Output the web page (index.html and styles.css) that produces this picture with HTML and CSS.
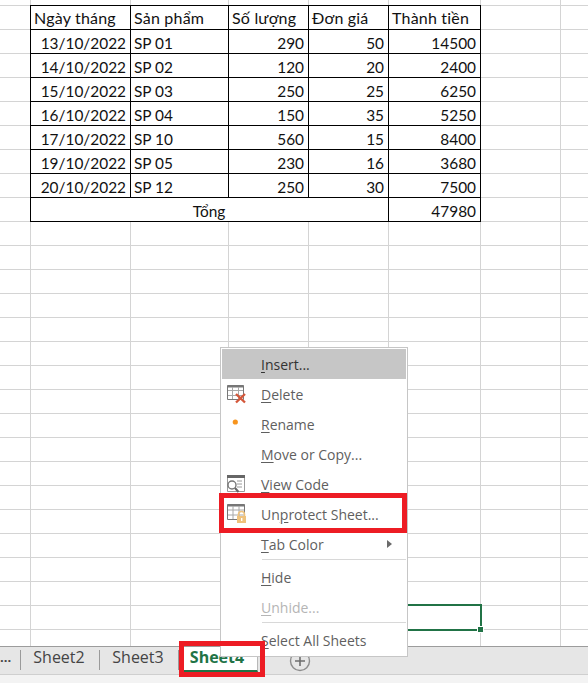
FILE: index.html
```html
<!DOCTYPE html>
<html lang="vi">
<head>
<meta charset="utf-8">
<title>Sheet4</title>
<link rel="stylesheet" href="styles.css">
</head>
<body>
<div class="app">
  <main class="sheet">
    <table class="data">
      <colgroup><col class="c1"><col class="c2"><col class="c3"><col class="c4"><col class="c5"></colgroup>
      <tr class="head"><td>Ngày tháng</td><td>Sản phẩm</td><td>Số lượng</td><td>Đơn giá</td><td>Thành tiền</td></tr>
      <tr><td class="num">13/10/2022</td><td>SP 01</td><td class="num">290</td><td class="num">50</td><td class="num">14500</td></tr>
      <tr><td class="num">14/10/2022</td><td>SP 02</td><td class="num">120</td><td class="num">20</td><td class="num">2400</td></tr>
      <tr><td class="num">15/10/2022</td><td>SP 03</td><td class="num">250</td><td class="num">25</td><td class="num">6250</td></tr>
      <tr><td class="num">16/10/2022</td><td>SP 04</td><td class="num">150</td><td class="num">35</td><td class="num">5250</td></tr>
      <tr><td class="num">17/10/2022</td><td>SP 10</td><td class="num">560</td><td class="num">15</td><td class="num">8400</td></tr>
      <tr><td class="num">19/10/2022</td><td>SP 05</td><td class="num">230</td><td class="num">16</td><td class="num">3680</td></tr>
      <tr><td class="num">20/10/2022</td><td>SP 12</td><td class="num">250</td><td class="num">30</td><td class="num">7500</td></tr>
      <tr><td colspan="4" class="mid">Tổng</td><td class="num">47980</td></tr>
    </table>
    <div class="selection"><span class="handle"></span></div>
  </main>

  <nav class="tabbar">
    <div class="tab tab-more">...</div>
    <div class="tab">Sheet2</div>
    <div class="tab">Sheet3</div>
    <div class="tab tab-active">Sheet4</div>
    <svg class="add" width="22" height="22" viewBox="0 0 22 22"><circle cx="11" cy="11" r="9.5" fill="none" stroke="#8c8c8c" stroke-width="1.4"/><path d="M11 6v10M6 11h10" stroke="#6e6e6e" stroke-width="1.6" fill="none"/></svg>
  </nav>
  <div class="strip"></div>
</div>

<div class="menu">
  <div class="item hot"><span class="slot"></span><span><u>I</u>nsert...</span></div>
  <div class="item"><span class="slot"><svg width="20" height="20" viewBox="0 0 20 20"><path d="M1.5 1.5h16v14h-16z" fill="#fff" stroke="#777"/><path d="M1.5 2.5h16" stroke="#777" stroke-width="2"/><path d="M6.5 3v12M12.5 3v12M2 6.5h15M2 11.5h15" stroke="#a8a8a8" fill="none"/><path d="M10 10l9 8.5M19 10l-9 8.5" stroke="#d4573a" stroke-width="2.4" fill="none"/></svg></span><span><u>D</u>elete</span></div>
  <div class="item"><span class="slot"><svg width="20" height="20" viewBox="0 0 20 20"><circle cx="9.3" cy="8" r="2.6" fill="#f7941d"/></svg></span><span><u>R</u>ename</span></div>
  <div class="item"><span class="slot"></span><span><u>M</u>ove or Copy...</span></div>
  <div class="item"><span class="slot"><svg width="20" height="20" viewBox="0 0 20 20"><path d="M1.5 1.5h17v16h-17z" fill="#fff" stroke="#9a9a9a"/><path d="M1 2.5h18" stroke="#666" stroke-width="3"/><path d="M11 7h5M11 10h5M11 13h5" stroke="#9a9a9a" fill="none"/><circle cx="6" cy="11" r="4" fill="#fff" stroke="#777" stroke-width="1.4"/><path d="M9 14l3.5 4" stroke="#666" stroke-width="2" fill="none"/></svg></span><span><u>V</u>iew Code</span></div>
  <div class="item"><span class="slot"><svg width="20" height="20" viewBox="0 0 20 20"><path d="M1.5 .5h17v15h-17z" fill="#fff" stroke="#777"/><path d="M1.5 1.5h17" stroke="#777" stroke-width="2"/><path d="M7 2v13M13 2v13M2 6h16M2 11h16" stroke="#a8a8a8" fill="none"/><path d="M12.5 12V10.5a3 3 0 0 1 6 0V12" fill="none" stroke="#efc27c" stroke-width="1.6"/><rect x="11" y="12" width="9" height="7" fill="#efc27c"/><rect x="15" y="14" width="1.4" height="3" fill="#fff"/></svg></span><span>Un<u>p</u>rotect Sheet...</span></div>
  <div class="item"><span class="slot"></span><span><u>T</u>ab Color</span><span class="arrow"></span></div>
  <div class="sep"></div>
  <div class="item tight"><span class="slot"></span><span><u>H</u>ide</span></div>
  <div class="item tight off"><span class="slot"></span><span><u>U</u>nhide...</span></div>
  <div class="sep"></div>
  <div class="item last"><span class="slot"></span><span><u>S</u>elect All Sheets</span></div>
</div>

<div class="mark mark-menu"></div>
<div class="mark mark-tab"></div>
</body>
</html>
```
FILE: styles.css
```css
* { box-sizing: border-box; }
html, body { margin: 0; padding: 0; }
body { width: 588px; height: 683px; overflow: hidden; position: relative; background: #fff; }

.app { display: flex; flex-direction: column; height: 683px; }

.sheet {
  position: relative;
  flex: 0 0 646px;
  padding: 5px 0 0 30px;
  overflow: hidden;
  background-color: #fff;
  background-image:
    linear-gradient(#d4d4d4, #d4d4d4), linear-gradient(#d4d4d4, #d4d4d4),
    linear-gradient(#d4d4d4, #d4d4d4), linear-gradient(#d4d4d4, #d4d4d4),
    linear-gradient(#d4d4d4, #d4d4d4), linear-gradient(#d4d4d4, #d4d4d4),
    linear-gradient(#d4d4d4, #d4d4d4),
    repeating-linear-gradient(to bottom, transparent 0, transparent 5px, #d4d4d4 5px, #d4d4d4 6px, transparent 6px, transparent 24px);
  background-size: 1px 100%, 1px 100%, 1px 100%, 1px 100%, 1px 100%, 1px 100%, 1px 100%, 100% 100%;
  background-position: 30px 0, 130px 0, 228px 0, 308px 0, 388px 0, 480px 0, 560px 0, 0 0;
  background-repeat: no-repeat;
}

.data {
  border-collapse: collapse;
  table-layout: fixed;
  width: 451px;
  background: #fff;
  font-family: Lato, "Liberation Sans", sans-serif;
  font-size: 15.4px;
  color: #111;
}
.c1 { width: 100px; }
.c2 { width: 98px; }
.c3 { width: 80px; }
.c4 { width: 80px; }
.c5 { width: 92px; }
.data tr { height: 24px; }
.data td {
  border: 1px solid #000;
  padding: 2px 4px 0 3px;
  line-height: 20px;
  white-space: nowrap;
  overflow: hidden;
}
.data .head td { font-size: 16px; letter-spacing: .2px; padding: 1px 4px 1px 3px; }
.data .num { text-align: right; }
.data .mid { text-align: center; }

.selection {
  position: absolute;
  left: 388px;
  top: 604px;
  width: 94px;
  height: 27px;
  border: 2px solid #217346;
}
.handle {
  position: absolute;
  right: -4px;
  bottom: -4px;
  width: 7px;
  height: 7px;
  background: #217346;
  border: 1px solid #fff;
}

.tabbar {
  flex: 0 0 29px;
  display: flex;
  align-items: flex-start;
  background: #e6e6e6;
  border-top: 1px solid #9c9c9c;
  border-bottom: 1px solid #cfcfcf;
  font-family: "Open Sans", "Liberation Sans", sans-serif;
  font-size: 16px;
  color: #444;
}
.tab {
  flex: 0 0 79px;
  height: 20px;
  margin-top: 3px;
  padding-right: 2px;
  line-height: 15px;
  text-align: center;
  border-right: 1px solid #9a9a9a;
}
.tab-more {
  flex-basis: 21px;
  min-width: 0;
  text-align: right;
  padding-right: 9px;
  font-weight: 700;
  font-size: 13px;
}
.tab-active {
  height: 25px;
  margin-top: 0;
  padding-top: 3px;
  background: #fff;
  border-right: 1px solid #b8b8b8;
  border-bottom: 2px solid #217346;
  color: #217346;
  font-weight: 700;
}
.add { margin: 3px 0 0 31px; }

.strip { flex: 1; background: #f3f3f3; }

.menu {
  position: absolute;
  left: 220px;
  top: 347px;
  width: 188px;
  height: 310px;
  padding: 1px;
  background: #fff;
  border: 1px solid #c6c6c6;
  font-family: "Open Sans", "Liberation Sans", sans-serif;
  font-size: 14px;
  color: #5f5f5f;
}
.item { display: flex; align-items: center; height: 30px; position: relative; }
.item.tight { height: 29.5px; }
.item.last { height: 29px; }
.item.hot { background: #c6c6c6; color: #333; }
.item.off { color: #b5b5b5; }
.slot { flex: 0 0 39px; display: flex; padding-left: 4px; }
.slot svg { display: block; }
.item u { text-underline-offset: 2px; }
.arrow {
  position: absolute;
  right: 14px;
  top: 11px;
  border-left: 5px solid #6a6a6a;
  border-top: 4px solid transparent;
  border-bottom: 4px solid transparent;
}
.sep { height: 4px; margin-left: 40px; border-top: 1px solid #d8d8d8; }

.mark { position: absolute; border: 5px solid #ed1c24; }
.mark-menu { left: 219px; top: 493px; width: 188px; height: 40px; }
.mark-tab { left: 179px; top: 641px; width: 86px; height: 36px; }
```
